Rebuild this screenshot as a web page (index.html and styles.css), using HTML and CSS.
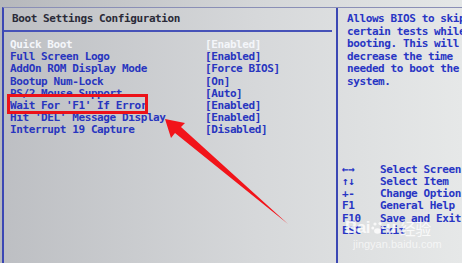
FILE: index.html
```html
<!DOCTYPE html>
<html>
  <head>
    <meta charset="UTF-8">
    <title>Boot Settings Configuration</title>
    <link rel="stylesheet" href="styles.css">
  </head>
  <body>
    <div class="screen">
      <div class="frame">
        <div class="main">
          <h1 class="title">Boot Settings Configuration</h1>
          <ul class="settings">
            <li class="active"><span>Quick Boot</span><span>[Enabled]</span></li>
            <li><span>Full Screen Logo</span><span>[Enabled]</span></li>
            <li><span>AddOn ROM Display Mode</span><span>[Force BIOS]</span></li>
            <li><span>Bootup Num-Lock</span><span>[On]</span></li>
            <li><span>PS/2 Mouse Support</span><span>[Auto]</span></li>
            <li><span>Wait For 'F1' If Error</span><span>[Enabled]</span></li>
            <li><span>Hit 'DEL' Message Display</span><span>[Enabled]</span></li>
            <li><span>Interrupt 19 Capture</span><span>[Disabled]</span></li>
          </ul>
        </div>
        <div class="help">
          <p class="help-text">Allows BIOS to skip
certain tests while
booting. This will
decrease the time
needed to boot the
system.</p>
          <ul class="keys">
            <li><span>&larr;&rarr;</span><span>Select Screen</span></li>
            <li><span>&uarr;&darr;</span><span>Select Item</span></li>
            <li><span>+-</span><span>Change Option</span></li>
            <li><span>F1</span><span>General Help</span></li>
            <li><span>F10</span><span>Save and Exit</span></li>
            <li><span>ESC</span><span>Exit</span></li>
          </ul>
        </div>
      </div>

      <!-- annotation: red box + arrow -->
      <div class="mark"></div>
      <svg class="arrow" width="462" height="263" viewBox="0 0 462 263">
        <polygon points="165,119 185,123 181,127 288,224 175,133 171,138" fill="#f2141a"/>
      </svg>

      <div class="watermark">
        <div class="wm-logo">Bai<svg width="14" height="14" viewBox="0 0 14 14"><circle cx="4" cy="3" r="1.6"/><circle cx="9" cy="2.5" r="1.6"/><circle cx="1.8" cy="7" r="1.5"/><circle cx="11.5" cy="6.5" r="1.5"/><ellipse cx="6.5" cy="10" rx="3.4" ry="2.8"/></svg>u<span class="wm-cn">经验</span></div>
        <div class="wm-url">jingyan.baidu.com</div>
      </div>
    </div>
  </body>
</html>
```

FILE: styles.css
```css
html, body {
  margin: 0;
  padding: 0;
}
body {
  width: 462px;
  height: 263px;
  overflow: hidden;
  font-family: "DejaVu Sans Mono", "Liberation Mono", monospace;
  font-weight: bold;
  font-size: 11px;
  letter-spacing: -0.4px;
}
.screen {
  position: relative;
  width: 462px;
  height: 263px;
  background: linear-gradient(to right, #b6b8bc, #d4d6d8 55%, #e4e7e7);
  padding-top: 7px;
  box-sizing: border-box;
}
.frame {
  display: flex;
  height: 256px;
  border-left: 2px solid #3b47b4;
  border-top: 1px solid #8a8fb6;
  margin-left: 2px;
  background: linear-gradient(to right, #bdbfc3, #d6d8da 55%, #e6e8e8);
}
.main {
  width: 334px;
  padding: 5px 8px 0 4px;
  box-sizing: border-box;
  border-right: 2px solid #3b47b4;
}
.title {
  margin: 0 -4px 0 -4px;
  padding: 0 0 5px 8px;
  font-size: 11px;
  font-weight: bold;
  line-height: 12px;
  color: #2a2a38;
  border-bottom: 2px solid #4652b8;
}
.settings {
  list-style: none;
  margin: 7px 0 0;
  padding: 0 0 0 2px;
  color: #2835bf;
  line-height: 12.2px;
}
.settings li {
  display: grid;
  grid-template-columns: 195px auto;
}
.settings li.active {
  color: #f4f6fa;
}
.help {
  flex: 1;
  display: flex;
  flex-direction: column;
  justify-content: space-between;
  padding: 5px 0 27px 4px;
  color: #2835c4;
  overflow: hidden;
}
.help-text {
  margin: 0 0 0 5px;
  white-space: pre;
  line-height: 12.6px;
}
.keys {
  list-style: none;
  margin: 0;
  padding: 0;
  line-height: 12.2px;
  white-space: nowrap;
}
.keys li {
  display: grid;
  grid-template-columns: 38px auto;
}
.mark {
  position: absolute;
  left: 7px;
  top: 94px;
  width: 135px;
  height: 14px;
  border: 3px solid #ec1219;
}
.arrow {
  position: absolute;
  left: 0;
  top: 0;
}
.watermark {
  position: absolute;
  left: 345px;
  top: 216px;
  color: rgba(255, 255, 255, 0.8);
  font-family: "Liberation Sans", "Noto Sans CJK SC", sans-serif;
  letter-spacing: 0;
}
.wm-logo {
  display: flex;
  align-items: center;
  font-size: 17px;
  font-weight: bold;
  letter-spacing: -0.5px;
}
.wm-logo svg {
  fill: rgba(255, 255, 255, 0.8);
  margin: 0 1px;
}
.wm-cn {
  margin-left: 4px;
  font-weight: normal;
  font-size: 16px;
}
.wm-url {
  margin: -2px 0 0 8px;
  font-size: 11px;
  font-weight: normal;
  color: rgba(255, 255, 255, 0.65);
}
```
